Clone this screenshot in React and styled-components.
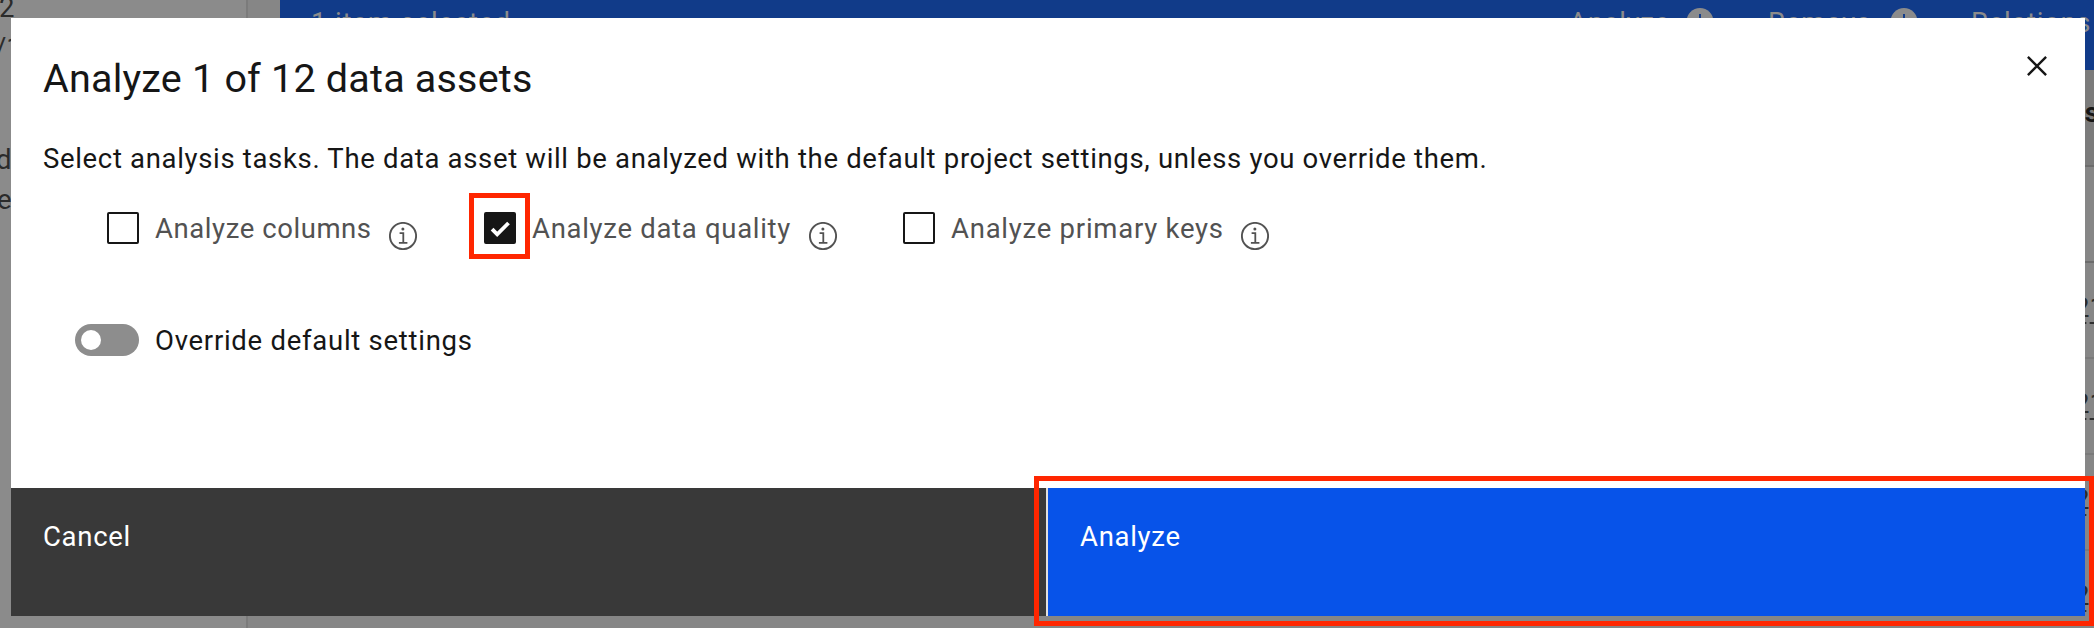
import React from "react";
import styled, { createGlobalStyle } from "styled-components";

const GlobalStyle = createGlobalStyle`
  * { box-sizing: border-box; }
  body {
    margin: 0;
    overflow: hidden;
    background: #868686;
    font-family: Roboto, "Liberation Sans", sans-serif;
    font-size: 27.5px;
    line-height: 36px;
    color: #161616;
  }
`;

const Screen = styled.div`
  position: relative;
  width: 2094px;
  height: 628px;
  overflow: hidden;
`;

const Page = styled.div`
  display: flex;
  height: 628px;
  background: #868686;
`;

const Sidebar = styled.aside`
  flex: none;
  width: 248px;
  height: 628px;
  background: #8b8b8b;
  border-right: 2px solid #7b7b7b;
  overflow: hidden;
`;

const SideText = styled.div`
  height: 40px;
  line-height: 40px;
  margin-top: ${(p) => p.$top || 0}px;
  margin-left: ${(p) => p.$left || 0}px;
  white-space: nowrap;
  color: #2b2b2b;
`;

const Content = styled.main`
  flex: 1;
  min-width: 0;
  padding-left: 32px;
  background: #868686;
`;

const ActionBar = styled.div`
  display: flex;
  align-items: flex-start;
  height: 70px;
  padding: 4px 0 0 31px;
  background: #113b89;
  color: #8b8b8b;
  white-space: nowrap;
  overflow: hidden;
`;

const Selection = styled.span`
  flex: none;
  width: 1258px;
  padding-top: 1px;
  letter-spacing: 0.85px;
`;

const BarAction = styled.span`
  display: flex;
  flex: none;
  width: ${(p) => p.$width}px;
  letter-spacing: 0.7px;
`;

const BarLabel = styled.span`
  flex: none;
  width: ${(p) => p.$width}px;
  padding-top: 1px;
`;

const HeadCell = styled.div`
  display: flex;
  justify-content: flex-end;
  height: 97px;
  padding-top: 25px;
  margin-right: -5px;
  background: #7b7b7b;
  border-bottom: 2px solid #6c6c6c;
  font-weight: 700;
`;

const Row = styled.div`
  display: flex;
  justify-content: flex-end;
  align-items: center;
  height: 96px;
  margin-right: -11px;
  padding-bottom: 2px;
  border-bottom: 2px solid ${(p) => (p.$strong ? "#6c6c6c" : "#7a7a7a")};
`;

const DateText = styled.span`
  line-height: 28px;
  border-bottom: 2px dashed #2f2f2f;
  color: #2b2b2b;
`;

const Modal = styled.section`
  position: absolute;
  top: 18px;
  left: 11px;
  display: flex;
  flex-direction: column;
  width: 2074px;
  height: 598px;
  background: #fff;
`;

const ModalHeader = styled.header`
  display: flex;
  justify-content: space-between;
  height: 84px;
  padding: 36px 38px 0 32px;
`;

const Title = styled.h2`
  margin: 1px 0 0;
  font-size: 39.5px;
  font-weight: 400;
  line-height: 48px;
  letter-spacing: 0.2px;
`;

const CloseButton = styled.button`
  width: 20px;
  height: 20px;
  padding: 0;
  margin-top: 2px;
  border: 0;
  background: none;
  line-height: 0;
`;

const ModalBody = styled.div`
  flex: 1;
  padding: 37px 32px 0;
`;

const Description = styled.p`
  margin: 0;
  line-height: 40px;
  letter-spacing: 0.67px;
  white-space: nowrap;
`;

const TaskRow = styled.div`
  display: flex;
  align-items: center;
  height: 32px;
  margin-top: 33px;
  padding-left: 64px;
`;

const Task = styled.div`
  display: flex;
  align-items: center;
  flex: none;
  width: ${(p) => p.$width}px;
  margin-right: ${(p) => p.$gap}px;
`;

const Checkbox = styled.span`
  display: flex;
  align-items: center;
  justify-content: center;
  width: 32px;
  height: 32px;
  border: 2px solid #161616;
  border-radius: 2px;
  background: ${(p) => (p.$checked ? "#161616" : "#fff")};
`;

const TaskLabel = styled.label`
  margin-left: 16px;
  padding-top: 2px;
  color: #525252;
  letter-spacing: ${(p) => p.$spacing}px;
  white-space: nowrap;
`;

const InfoButton = styled.span`
  width: 28px;
  height: 28px;
  margin: 16px 0 0 auto;
  line-height: 0;
`;

const ToggleRow = styled.div`
  display: flex;
  align-items: center;
  height: 32px;
  margin-top: 80px;
  padding-left: 32px;
`;

const Toggle = styled.span`
  display: flex;
  align-items: center;
  width: 64px;
  height: 32px;
  padding-left: 6px;
  border-radius: 16px;
  background: #8d8d8d;
`;

const Knob = styled.span`
  width: 20px;
  height: 20px;
  border-radius: 50%;
  background: #fff;
`;

const ToggleLabel = styled.span`
  margin-left: 16px;
  padding-top: 2px;
  letter-spacing: 0.73px;
`;

const Footer = styled.footer`
  display: flex;
  height: 128px;
`;

const FooterButton = styled.button`
  flex: none;
  display: flex;
  align-items: flex-start;
  width: ${(p) => (p.$primary ? 1037 : 1035)}px;
  padding: 31px 0 0 32px;
  border: 0;
  background: ${(p) => (p.$primary ? "#0753e9" : "#393939")};
  color: #fff;
  font: inherit;
  letter-spacing: 0.7px;
`;

const Divider = styled.span`
  width: 2px;
  background: #e0e0e0;
`;

const Highlight = styled.div`
  position: absolute;
  top: ${(p) => p.$top}px;
  left: ${(p) => p.$left}px;
  width: ${(p) => p.$width}px;
  height: ${(p) => p.$height}px;
  border: 5px solid #ff2600;
`;

const InfoIcon = () => (
  <svg width="28" height="28" viewBox="0 0 28 28" fill="none" stroke="#525252">
    <circle cx="14" cy="14" r="13.1" strokeWidth="1.9" />
    <path d="M10.6 11.2H14.3V20.6M9.9 20.8H18.4" strokeWidth="1.8" />
    <circle cx="13.9" cy="6.9" r="1.5" fill="#525252" stroke="none" />
  </svg>
);

const CloseIcon = () => (
  <svg width="20" height="20" viewBox="0 0 20 20" fill="none" stroke="#161616" strokeWidth="2.4">
    <path d="M.9 .9 19.1 19.1M19.1 .9 .9 19.1" />
  </svg>
);

const CheckIcon = () => (
  <svg width="28" height="28" viewBox="0 0 28 28" fill="none" stroke="#fff" strokeWidth="3.8">
    <path d="M6.1 15.1 11.2 20.4 22.5 9" />
  </svg>
);

const BarIcon = () => (
  <svg width="28" height="28" viewBox="0 0 28 28">
    <circle cx="14" cy="17.5" r="13.5" fill="#8b8b8b" />
    <path d="M14 10V25M9 20 14 25 19 20" stroke="#113b89" strokeWidth="2" fill="none" />
  </svg>
);

const tasks = [
  { label: "Analyze columns", width: 310, gap: 67, spacing: 0.57 },
  { label: "Analyze data quality", width: 353, gap: 66, spacing: 0.7, checked: true },
  { label: "Analyze primary keys", width: 366, gap: 0, spacing: 0.75 },
];

export default function App() {
  return (
    <Screen>
      <GlobalStyle />
      <Page>
        <Sidebar>
          <SideText $top={-12} $left={-1}>2</SideText>
          <SideText $left={-5}>/12</SideText>
          <SideText $top={72} $left={-4}>d</SideText>
          <SideText $left={-3}>e</SideText>
        </Sidebar>
        <Content>
          <ActionBar>
            <Selection>1 item selected</Selection>
            <BarAction $width={199}>
              <BarLabel $width={117}>Analyze</BarLabel>
              <BarIcon />
            </BarAction>
            <BarAction $width={203}>
              <BarLabel $width={122}>Remove</BarLabel>
              <BarIcon />
            </BarAction>
            <BarAction $width={140}>
              <BarLabel $width={140}>Relations</BarLabel>
            </BarAction>
          </ActionBar>
          <HeadCell>Analysis</HeadCell>
          <Row $strong />
          <Row><DateText>2021</DateText></Row>
          <Row><DateText>2021</DateText></Row>
          <Row><DateText>2021</DateText></Row>
          <Row><DateText>2021</DateText></Row>
        </Content>
      </Page>
      <Modal>
        <ModalHeader>
          <Title>Analyze 1 of 12 data assets</Title>
          <CloseButton aria-label="Close"><CloseIcon /></CloseButton>
        </ModalHeader>
        <ModalBody>
          <Description>
            Select analysis tasks. The data asset will be analyzed with the default project settings, unless you override them.
          </Description>
          <TaskRow>
            {tasks.map((t) => (
              <Task key={t.label} $width={t.width} $gap={t.gap}>
                <Checkbox $checked={t.checked}>{t.checked && <CheckIcon />}</Checkbox>
                <TaskLabel $spacing={t.spacing}>{t.label}</TaskLabel>
                <InfoButton><InfoIcon /></InfoButton>
              </Task>
            ))}
          </TaskRow>
          <ToggleRow>
            <Toggle><Knob /></Toggle>
            <ToggleLabel>Override default settings</ToggleLabel>
          </ToggleRow>
        </ModalBody>
        <Footer>
          <FooterButton>Cancel</FooterButton>
          <Divider />
          <FooterButton $primary>Analyze</FooterButton>
        </Footer>
      </Modal>
      <Highlight $top={193} $left={469} $width={61} $height={66} />
      <Highlight $top={476} $left={1034} $width={1060} $height={150} />
    </Screen>
  );
}
